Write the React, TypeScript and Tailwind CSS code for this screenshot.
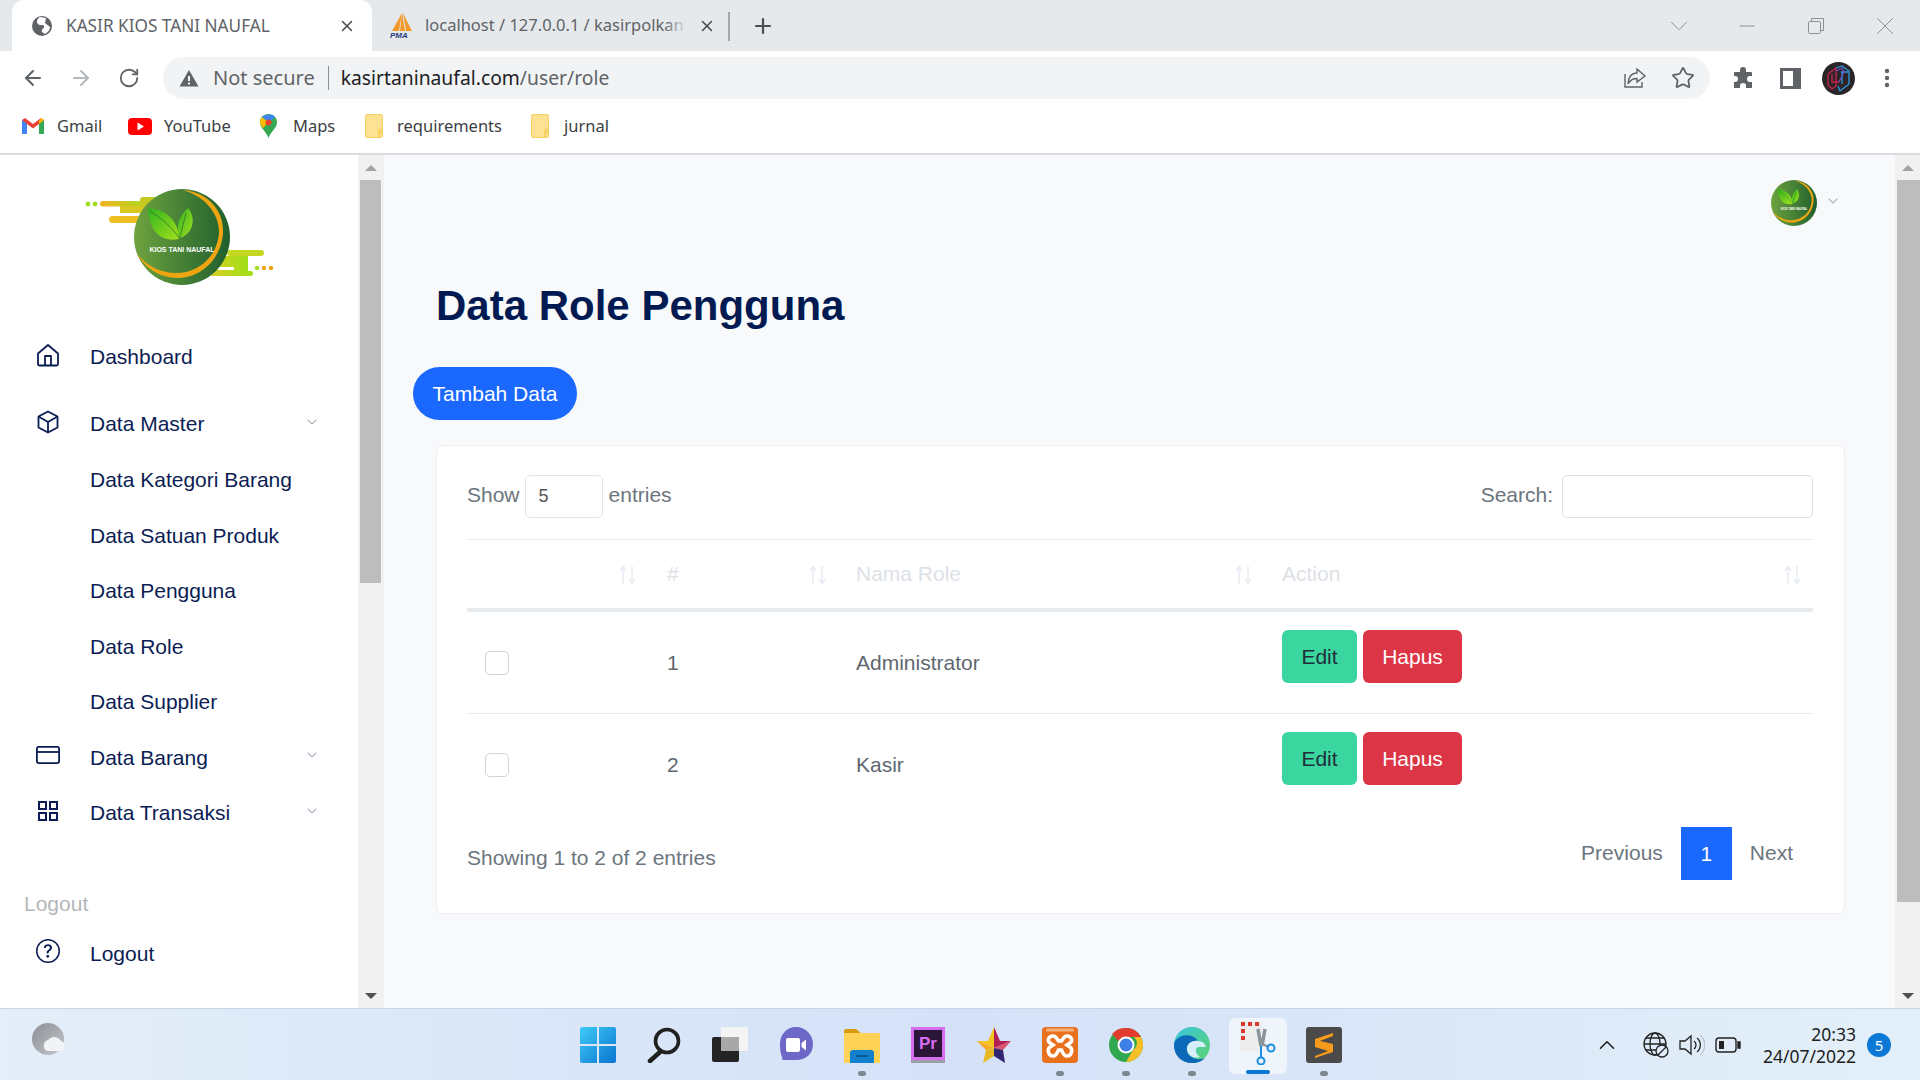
import { ArrowLeft, ArrowRight, RotateCw, X, Plus, Star, ChevronDown, ChevronUp, Minus, MoreVertical } from "lucide-react";
import { BsQuestionCircle } from "react-icons/bs";

const ui = "font-['Noto_Sans',sans-serif]";

const LogoMark = ({ labelSize = 7 }: { labelSize?: number }) => (
  <g>
    <defs>
      <linearGradient id="disc" x1="0" y1="0" x2="1" y2="0">
        <stop offset="0" stopColor="#6ea33f" />
        <stop offset="1" stopColor="#1f5f2d" />
      </linearGradient>
      <linearGradient id="leaf" x1="0" y1="0" x2="1" y2="1">
        <stop offset="0" stopColor="#2fb31f" />
        <stop offset="1" stopColor="#a4e01e" />
      </linearGradient>
    </defs>
    <circle cx="48" cy="48" r="48" fill="url(#disc)" />
    <path d="M49 1 C74 3 90 22 89 43 C88 70 66 90 42 89 C24 88 10 78 3 65 C14 78 28 84 42 84 C66 84 84 66 85 43 C85 25 72 8 49 1 Z" fill="#eda512" />
    <path d="M14 19 C26 20 44 26 45 50 C30 53 15 46 14 19 Z" fill="url(#leaf)" />
    <path d="M54 19 C62 28 60 44 46 49 C41 40 44 28 54 19 Z" fill="url(#leaf)" />
    <path d="M16 22 C28 30 38 38 45 49 M52 24 C50 32 48 40 46 48" stroke="#2b7a2a" strokeWidth="0.800" fill="none" />
    <text x="48" y="63" textAnchor="middle" fontSize={labelSize} fontWeight="700" fill="#fff" fontFamily="'Liberation Sans',sans-serif">
      KIOS TANI NAUFAL
    </text>
  </g>
);

const SidebarLogo = () => (
  <svg width="190" height="100" viewBox="0 0 190 100">
    <defs>
      <linearGradient id="streak" x1="0" y1="0" x2="1" y2="0">
        <stop offset="0" stopColor="#f4b223" />
        <stop offset="1" stopColor="#a5df1c" />
      </linearGradient>
      <linearGradient id="streak2" x1="0" y1="0" x2="1" y2="0">
        <stop offset="0" stopColor="#d8cf22" />
        <stop offset="1" stopColor="#9fe01a" />
      </linearGradient>
    </defs>
    <circle cx="3" cy="18" r="2.400" fill="#9fdc1c" />
    <circle cx="10" cy="18" r="2.400" fill="#9fdc1c" />
    <rect x="15" y="15" width="50" height="5.500" rx="2.700" fill="url(#streak)" />
    <rect x="35" y="20" width="30" height="7" fill="#d7c823" />
    <rect x="55" y="11" width="25" height="10" rx="3" fill="#c7c923" />
    <rect x="24" y="30" width="40" height="7" rx="3.500" fill="#eec022" />
    <rect x="142" y="64" width="37" height="6" rx="3" fill="#c4d821" />
    <rect x="125" y="70" width="38" height="15" fill="url(#streak2)" />
    <rect x="125" y="85" width="43" height="5" rx="2.500" fill="url(#streak2)" />
    <rect x="133" y="81" width="16" height="3" fill="#fff" />
    <circle cx="172" cy="82" r="2.200" fill="#a5df1c" />
    <circle cx="179" cy="82" r="2.200" fill="#eda512" />
    <circle cx="186" cy="82" r="2.200" fill="#eda512" />
    <g transform="translate(49 3)">
      <LogoMark />
    </g>
  </svg>
);

const HouseIcon = () => (
  <svg width="24" height="24" viewBox="0 0 24 24" fill="none" stroke="currentColor" strokeWidth="1.800" strokeLinejoin="round">
    <path d="M12 2 L22 10.500 V21 a1.500 1.500 0 0 1-1.500 1.500 H3.500 A1.500 1.500 0 0 1 2 21 V10.500 Z" />
    <path d="M9 22.500 V13 H15 V22.500" />
  </svg>
);

const CubeIcon = () => (
  <svg width="24" height="24" viewBox="0 0 24 24" fill="none" stroke="currentColor" strokeWidth="1.800" strokeLinejoin="round">
    <path d="M12 1.500 L21.500 6.500 V17.500 L12 22.500 L2.500 17.500 V6.500 Z" />
    <path d="M2.500 6.500 L12 12 L21.500 6.500 M12 12 V22.500" />
  </svg>
);

const CardIcon = () => (
  <svg width="24" height="24" viewBox="0 0 24 18" fill="none" stroke="currentColor" strokeWidth="1.800">
    <rect x="0.900" y="0.900" width="22.200" height="16.200" rx="2" />
    <path d="M1 6 H23" />
  </svg>
);

const GridIcon = () => (
  <svg width="24" height="24" viewBox="0 0 24 24" fill="none" stroke="currentColor" strokeWidth="2">
    <rect x="3" y="3" width="7" height="7" />
    <rect x="14" y="3" width="7" height="7" />
    <rect x="3" y="14" width="7" height="7" />
    <rect x="14" y="14" width="7" height="7" />
  </svg>
);

const MenuItem = ({ icon, label, chevron, tall }: { icon?: React.ReactNode; label: string; chevron?: boolean; tall?: boolean }) => (
  <div className={`flex items-center text-[21px] text-[#0b1d54] ${tall ? "h-[56px]" : "h-[55.5px]"}`}>
    <span className="w-[90px] pl-[36px] flex items-center shrink-0 -mt-[4px]">{icon}</span>
    <span className="flex-1">{label}</span>
    {chevron && <ChevronDown size={16} strokeWidth={1.6} className="text-[#a9b6c4] mr-[38px] -mt-[4px]" />}
  </div>
);

const SortArrows = () => (
  <svg width="20" height="20" viewBox="0 0 20 20" className="shrink-0 text-[#e6ebf2] mt-[2px]" fill="none" stroke="currentColor" strokeWidth="1.4">
    <path d="M6 19 V2 M3 6 L6 1.5 L9 6" />
    <path d="M15 1 V18 M12 14 L15 18.5 L18 14" />
  </svg>
);

const TableRow = ({ no, role, line }: { no: string; role: string; line?: boolean }) => (
  <div className={`grid grid-cols-[182px_189px_426px_549px] text-[#5f676f] ${line ? "h-[102px] border-b border-[#e9ecef]" : "h-[89px]"}`}>
    <div className="pl-[18px] pt-[39px]">
      <div className="w-[24px] h-[24px] rounded-[5px] border border-[#ced4da] bg-white" />
    </div>
    <div className="pl-[18px] pt-[39px] leading-[24px]">{no}</div>
    <div className="pl-[18px] pt-[39px] leading-[24px]">{role}</div>
    <div className="pl-[18px] pt-[18px] flex gap-[6px] items-start">
      <button className="w-[75px] h-[53px] rounded-[6px] bg-[#3bd59f] text-[#1f2d3a]">Edit</button>
      <button className="w-[99px] h-[53px] rounded-[6px] bg-[#dc3545] text-white">Hapus</button>
    </div>
  </div>
);

const Folder = () => (
  <svg width="18" height="24" viewBox="0 0 18 24">
    <rect x="0.5" y="0.5" width="17" height="23" rx="1.5" fill="#fde293" stroke="#f5d061" />
    <path d="M14 23 V16 a1 1 0 0 1 2 0 V20" fill="none" stroke="#f2c53d" />
  </svg>
);

const Bookmark = ({ icon, label, width, gap }: { icon: React.ReactNode; label: string; width: string; gap: string }) => (
  <div className={`flex items-center ${gap} ${width}`}>
    {icon}
    <span>{label}</span>
  </div>
);

const TaskIcon = ({ children, dot, active }: { children: React.ReactNode; dot?: boolean; active?: boolean }) => (
  <div className="relative w-[66px] h-[72px] flex items-center justify-center">
    {active && <div className="absolute left-[4px] right-[4px] top-[9px] bottom-[7px] rounded-[6px] bg-white/60" />}
    <div className="relative">{children}</div>
    {dot && <div className="absolute bottom-[5px] left-[29px] w-[8px] h-[5px] rounded-full bg-[#7d8790]" />}
    {active && <div className="absolute bottom-[7px] left-[21px] w-[24px] h-[4px] rounded-full bg-[#0a78d4]" />}
  </div>
);

const Taskbar = () => (
  <div className="h-[72px] shrink-0 grid grid-cols-[1fr_auto_1fr] border-t border-[#c8d5e8] bg-gradient-to-r from-[#e3eef8] via-[#d4e1f8] to-[#e3eff8]">
    <div className="pl-[32px] pt-[14px]">
      <svg width="36" height="34" viewBox="0 0 36 34">
        <defs>
          <linearGradient id="moon" x1="0" y1="0" x2="1" y2="1">
            <stop offset="0" stopColor="#8b8f94" />
            <stop offset="1" stopColor="#c4c8cd" />
          </linearGradient>
        </defs>
        <circle cx="16" cy="16" r="16" fill="url(#moon)" />
        <path d="M15 28 a6 6 0 0 1 1-11 a8 8 0 0 1 13 1 a5.500 5.500 0 0 1 1 10 Z" fill="#f1f4f7" />
      </svg>
    </div>
    <div className="flex ml-[2px]">
      <TaskIcon>
        <svg width="36" height="36" viewBox="0 0 36 36">
          <defs>
            <linearGradient id="win" x1="0" y1="0" x2="1" y2="1">
              <stop offset="0" stopColor="#3ecbf6" />
              <stop offset="1" stopColor="#0a74d1" />
            </linearGradient>
          </defs>
          <path d="M0 2 a2 2 0 0 1 2-2 H17 V17 H0 Z M19 0 H34 a2 2 0 0 1 2 2 V17 H19 Z M0 19 H17 V36 H2 a2 2 0 0 1-2-2 Z M19 19 H36 V34 a2 2 0 0 1-2 2 H19 Z" fill="url(#win)" />
        </svg>
      </TaskIcon>
      <TaskIcon>
        <svg width="34" height="36" viewBox="0 0 34 36" fill="none" stroke="#202020" strokeWidth="3.600" strokeLinecap="round">
          <circle cx="20" cy="14" r="11.500" />
          <path d="M13 25 L3 34" strokeWidth="4.500" />
        </svg>
      </TaskIcon>
      <TaskIcon>
        <svg width="36" height="36" viewBox="0 0 36 36">
          <rect x="0" y="10" width="27" height="25" rx="2" fill="#242424" />
          <rect x="9" y="0" width="27" height="24" rx="1" fill="#f4f4f4" />
          <rect x="9" y="10" width="18" height="14" fill="#a8a8a8" />
        </svg>
      </TaskIcon>
      <TaskIcon>
        <svg width="34" height="36" viewBox="0 0 34 36">
          <path d="M17 0 C27 0 34 8 34 17 C34 27 27 33 17 33 H3 C5 31 1 30 1 17 C1 8 7 0 17 0 Z" fill="#6d68c8" />
          <rect x="7" y="11" width="14" height="14" rx="2" fill="#fff" />
          <path d="M22.500 16 L27 12.500 V23.500 L22.500 20 Z" fill="#fff" />
        </svg>
      </TaskIcon>
      <TaskIcon dot>
        <svg width="36" height="36" viewBox="0 0 36 36">
          <path d="M0 4 a2 2 0 0 1 2-2 H12 L17 6 H36 V12 H0 Z" fill="#d89b0e" />
          <rect x="0" y="6" width="36" height="30" fill="#fdd257" />
          <path d="M6 36 V26 a3 3 0 0 1 3-3 H27 a3 3 0 0 1 3 3 V36 Z" fill="#1380ce" />
          <rect x="12" y="28" width="12" height="2" fill="#0b5a96" />
        </svg>
      </TaskIcon>
      <TaskIcon>
        <svg width="34" height="36" viewBox="0 0 34 36">
          <rect x="0" y="0" width="34" height="33" fill="#d66cf0" />
          <rect x="3" y="3" width="28" height="27" fill="#2b1638" />
          <rect x="0" y="33" width="34" height="3" fill="#9aa0a6" />
          <text x="8" y="22" fontSize="17" fontWeight="700" fill="#d66cf0" fontFamily="'Liberation Sans',sans-serif">Pr</text>
        </svg>
      </TaskIcon>
      <TaskIcon>
        <svg width="36" height="36" viewBox="0 0 36 36">
          <path d="M18 0 L18 21 L1 14 L12 14 Z" fill="#f4c421" />
          <path d="M18 0 L24 14 L35 14 L18 21 Z" fill="#b31f54" />
          <path d="M35 14 L27 23 L18 21 Z" fill="#d9536c" />
          <path d="M1 14 L10 23 L18 21 Z" fill="#f6a81f" />
          <path d="M18 21 L10 23 L7 36 L18 29 Z" fill="#e8b922" />
          <path d="M18 21 L27 23 L29 36 L18 29 Z" fill="#33256f" />
        </svg>
      </TaskIcon>
      <TaskIcon dot>
        <svg width="36" height="36" viewBox="0 0 36 36">
          <rect width="36" height="36" rx="4" fill="#e8711d" />
          <rect x="4" y="1.500" width="28" height="3" rx="1.500" fill="#f5b27f" />
          <path d="M11 9 C6 9 5 14 8 16 L11 18 L8 20 C5 22 6 29 11 29 C14 29 15 26 16.500 23 H19.500 C21 26 22 29 25 29 C30 29 31 22 28 20 L25 18 L28 16 C31 14 30 9 25 9 C22 9 21 12 19.500 14 H16.500 C15 12 14 9 11 9 Z" fill="none" stroke="#fff" strokeWidth="3.500" />
        </svg>
      </TaskIcon>
      <TaskIcon dot>
        <svg width="34" height="36" viewBox="0 0 34 36">
          <circle cx="17" cy="18" r="17" fill="#2fa84f" />
          <path d="M17 1 A17 17 0 0 1 32 10 H17 A8 8 0 0 0 9.500 14 L3 7 A17 17 0 0 1 17 1 Z" fill="#e23d2f" />
          <path d="M32 10 A17 17 0 0 1 17 35 L24 23 A8 8 0 0 0 25 10 Z" fill="#f6c026" />
          <circle cx="17" cy="18" r="8.500" fill="#fff" />
          <circle cx="17" cy="18" r="6.500" fill="#3f7fe8" />
        </svg>
      </TaskIcon>
      <TaskIcon dot>
        <svg width="36" height="38" viewBox="0 0 36 38">
          <defs>
            <linearGradient id="edge" x1="0" y1="0" x2="1" y2="1">
              <stop offset="0" stopColor="#37c5dd" />
              <stop offset="1" stopColor="#5ed36c" />
            </linearGradient>
          </defs>
          <circle cx="18" cy="19" r="18" fill="url(#edge)" />
          <path d="M0 19 C0 30 8 37 18 37 C24 37 28 35 31 32 C24 35 14 32 13 24 C12 18 18 14 24 15 C21 10 14 8 8 10 C3 12 0 15 0 19 Z" fill="#0c69ba" />
          <path d="M13 24 C14 30 20 33 26 31 C22 28 20 23 24 21 H32 C31 17 28 15 24 15 C18 14 12 18 13 24 Z" fill="#d6eef7" />
        </svg>
      </TaskIcon>
      <TaskIcon active>
        <svg width="36" height="46" viewBox="0 0 36 46" className="-mt-[6px]">
          <rect x="0" y="2" width="22" height="30" fill="#ececec" />
          <path d="M1 3 H5 V7 H1 Z M8 3 H12 V7 H8 Z M15 3 H19 V7 H15 Z M1 10 H5 V14 H1 Z M1 17 H5 V21 H1 Z" fill="#d83b2d" />
          <path d="M18 10 L21 27 M25 10 L22 27" stroke="#8a949c" strokeWidth="3.500" />
          <path d="M22 25 L29 28" stroke="#8a949c" strokeWidth="2" />
          <circle cx="31" cy="29" r="3.500" fill="none" stroke="#1d8fe0" strokeWidth="2" />
          <circle cx="21" cy="42" r="3.500" fill="none" stroke="#1d8fe0" strokeWidth="2" />
          <path d="M21 27 V38" stroke="#1d8fe0" strokeWidth="2" />
        </svg>
      </TaskIcon>
      <TaskIcon dot>
        <svg width="36" height="36" viewBox="0 0 36 36">
          <rect width="36" height="36" rx="3" fill="#4a4a4a" />
          <path d="M27 6 L9 12 V20 L22 24 L9 29 V31 L27 25 V17 L14 14 L27 9 Z" fill="#f79b1d" />
        </svg>
      </TaskIcon>
    </div>
    <div className={`flex items-center justify-end pr-[29px] text-[#1d1d1d] ${ui}`}>
      <ChevronUp size={26} strokeWidth={1.4} className="mr-[23px]" />
      <svg width="26" height="26" viewBox="0 0 26 26" fill="none" stroke="#222" strokeWidth="1.300" className="mr-[10px]">
        <circle cx="12" cy="12" r="11" />
        <ellipse cx="12" cy="12" rx="5" ry="11" />
        <path d="M1 12 H23 M3 6 H21 M3 18 H21" />
        <circle cx="19" cy="19" r="6" fill="#e1ecf8" />
        <path d="M15 23 L23 15" />
      </svg>
      <svg width="26" height="24" viewBox="0 0 26 24" fill="none" stroke="#222" strokeWidth="1.300" className="mr-[10px]">
        <path d="M1 8 H6 L12 3 V21 L6 16 H1 Z" />
        <path d="M15 8 a5 5 0 0 1 0 8 M18 5 a9 9 0 0 1 0 14" />
        <path d="M21 2 a13 13 0 0 1 0 20" stroke="#bbc3cc" />
      </svg>
      <svg width="26" height="16" viewBox="0 0 26 16" fill="none" stroke="#222" strokeWidth="1.400" className="mr-[22px]">
        <rect x="1" y="1" width="20" height="14" rx="3" />
        <rect x="4" y="4" width="5" height="8" fill="#222" stroke="none" />
        <path d="M23 5 V11 H25 V5 Z" fill="#222" />
      </svg>
      <div className="text-right text-[17.5px] leading-[22px] mr-[11px]">
        <div>20:33</div>
        <div>24/07/2022</div>
      </div>
      <div className="w-[24px] h-[24px] rounded-full bg-[#0a78d4] text-white text-[15px] flex items-center justify-center">5</div>
    </div>
  </div>
);

const BrowserChrome = () => (
  <div className={`shrink-0 h-[155px] bg-white border-b-2 border-[#dadce0] ${ui} text-[#5f6368]`}>
    <div className="h-[51px] bg-[#e6e9ec] flex items-end pl-[12px]">
      <div className="w-[360px] h-[51px] bg-white rounded-t-[12px] flex items-center pl-[20px] pr-[16px]">
        <svg width="20" height="20" viewBox="0 0 20 20" className="mr-[14px]">
          <circle cx="10" cy="10" r="10" fill="#5f6368" />
          <path d="M8 1 C5 3 4 6 6 8 C8 10 11 8 12 10 C13 12 9 13 10 16 L13 18 C16 16 18 14 18 11 L13 7 L14 2 Z" fill="#fff" />
        </svg>
        <span className="flex-1 text-[17.2px] whitespace-nowrap">KASIR KIOS TANI NAUFAL</span>
        <X size={18} strokeWidth={2} className="text-[#45484c]" />
      </div>
      <div className="w-[358px] h-[51px] flex items-center pl-[18px] pr-[14px] relative">
        <svg width="24" height="26" viewBox="0 0 24 26" className="mr-[11px] shrink-0">
          <path d="M12 0 L2 18 H9 Z M12 0 L10 18 H15 Z M13 0 L22 18 H16 Z" fill="#f29a2e" />
          <text x="0" y="25" fontSize="8" fontWeight="700" fontStyle="italic" fill="#1f3a7a" fontFamily="'Liberation Sans',sans-serif">PMA</text>
        </svg>
        <div className="relative flex-1 min-w-0 overflow-hidden">
          <span className="text-[16.5px] whitespace-nowrap">localhost / 127.0.0.1 / kasirpolkan</span>
          <div className="absolute right-0 top-0 bottom-0 w-[24px] bg-gradient-to-r from-transparent to-[#e6e9ec]" />
        </div>
        <X size={18} strokeWidth={2} className="ml-[10px] text-[#45484c] shrink-0" />
        <div className="absolute right-0 top-[12px] w-[2px] h-[29px] bg-[#a4a7ab]" />
      </div>
      <div className="h-[51px] w-[66px] flex items-center justify-center">
        <Plus size={24} strokeWidth={2.200} className="text-[#4a4d51]" />
      </div>
      <div className="flex-1 h-[51px] flex items-center justify-end text-[#8b9096]">
        <ChevronDown size={30} strokeWidth={0.8} className="mr-[41px]" />
        <Minus size={24} strokeWidth={1} className="mr-[49px]" />
        <svg width="16" height="16" viewBox="0 0 16 16" fill="none" stroke="currentColor" className="mr-[46px]">
          <rect x="0.500" y="3.500" width="12" height="12" rx="1" />
          <path d="M3.500 3 V0.500 H15.500 V12.500 H13" />
        </svg>
        <X size={30} strokeWidth={0.8} className="mr-[20px]" />
      </div>
    </div>
    <div className="h-[54px] flex items-center pl-[21px]">
      <ArrowLeft size={24} strokeWidth={2} className="mr-[24px]" />
      <ArrowRight size={24} strokeWidth={2} className="text-[#b5b8bc] mr-[25px]" />
      <RotateCw size={22} strokeWidth={2} className="mr-[23px]" />
      <div className="flex items-center h-[42px] w-[1547px] rounded-full bg-[#f1f3f4] pl-[16px] pr-[15px]">
        <svg width="20" height="18" viewBox="0 0 20 18" className="mr-[14px]">
          <path d="M10 1 L19.500 17.500 H0.500 Z" fill="#5f6368" />
          <rect x="9" y="7" width="2" height="5" fill="#f1f3f4" />
          <rect x="9" y="13.500" width="2" height="2" fill="#f1f3f4" />
        </svg>
        <span className="text-[20px]">Not secure</span>
        <div className="w-[1px] h-[24px] bg-[#8a8d91] ml-[13px] mr-[12px]" />
        <span className="flex-1 text-[19.3px] text-[#202124]">
          kasirtaninaufal.com<span className="text-[#5f6368]">/user/role</span>
        </span>
        <svg width="24" height="24" viewBox="0 0 24 24" fill="none" stroke="#5f6368" strokeWidth="1.400" className="mr-[24px]">
          <path d="M2 8 V21 H19 V16" />
          <path d="M14 3 L22 10 L14 16 V12.500 C10 12.500 7 14 5 18 C5 12 8 7 14 7 Z" />
        </svg>
        <Star size={24} strokeWidth={1.800} />
      </div>
      <svg width="22" height="22" viewBox="0 0 22 22" fill="#5f6368" className="ml-[22px] mr-[26px]">
        <path d="M8 3 a3 3 0 0 1 6 0 V5 H19 a1 1 0 0 1 1 1 V9 H18 a3 3 0 0 0 0 6 H20 V21 H14 V19 a3 3 0 0 0-6 0 V21 H2 V15 H3 a3 3 0 0 0 0-6 H2 V6 a1 1 0 0 1 1-1 H8 Z" />
      </svg>
      <svg width="21" height="21" viewBox="0 0 21 21" className="mr-[21px]">
        <rect width="21" height="21" fill="#5f6368" />
        <rect x="3" y="3" width="10" height="15" fill="#fff" />
      </svg>
      <svg width="33" height="33" viewBox="0 0 33 33" fill="none" strokeWidth="1.300">
        <circle cx="16.500" cy="16.500" r="16.500" fill="#2b2528" />
        <path d="M6 12 L14 6 V24 L10 27 L6 23 Z M10 12 V20 H17" stroke="#c8234f" />
        <path d="M14 6 L20 4 L27 9 V22 L18 29 L16 24 M19 10 H26 M20 10 V22" stroke="#2c9ae0" />
        <path d="M14 9 L20 6 L22 10 L17 20" stroke="#6c4fc0" />
      </svg>
      <MoreVertical size={24} strokeWidth={2.400} className="ml-[20px]" />
    </div>
    <div className="h-[42px] flex items-center pl-[22px] text-[16.5px] text-[#3c4043]">
      <Bookmark
        width="w-[106px]"
        gap="gap-[13px]"
        label="Gmail"
        icon={
          <svg width="22" height="16" viewBox="0 0 22 16">
            <path d="M0 2 V16 H5 V6 L11 10.500 L17 6 V16 H22 V2 L19 0 L11 6 L3 0 Z" fill="#ea4335" />
            <path d="M0 2 V16 H5 V6 Z" fill="#4285f4" />
            <path d="M17 6 V16 H22 V2 Z" fill="#34a853" />
            <path d="M19 0 L22 2 L17 6 V3 Z" fill="#fbbc04" />
          </svg>
        }
      />
      <Bookmark
        width="w-[132px]"
        gap="gap-[12px]"
        label="YouTube"
        icon={
          <svg width="24" height="17" viewBox="0 0 24 17">
            <rect width="24" height="17" rx="4" fill="#f00" />
            <path d="M9.500 4.500 L16 8.500 L9.500 12.500 Z" fill="#fff" />
          </svg>
        }
      />
      <Bookmark
        width="w-[105px]"
        gap="gap-[16px]"
        label="Maps"
        icon={
          <svg width="17" height="24" viewBox="0 0 17 24">
            <path d="M8.500 0 C3.500 0 0 3.500 0 8.500 C0 14 6 17 8.500 24 C11 17 17 14 17 8.500 C17 3.500 13.500 0 8.500 0 Z" fill="#34a853" />
            <path d="M2 3 C4 0.500 12 -1 15 3 L8.500 8.500 Z" fill="#4285f4" />
            <path d="M0 8.500 C0 6 1 4 2 3 L8.500 8.500 L3 14 C1 12 0 10 0 8.500 Z" fill="#fbbc04" />
            <circle cx="8.500" cy="8.500" r="3" fill="#ea4335" />
          </svg>
        }
      />
      <Bookmark width="w-[166px]" gap="gap-[14px]" label="requirements" icon={<Folder />} />
      <Bookmark width="w-[90px]" gap="gap-[15px]" label="jurnal" icon={<Folder />} />
    </div>
  </div>
);

const Scrollbar = ({ thumb }: { thumb: string }) => (
  <div className="flex flex-col w-[25px] shrink-0 bg-[#f1f1f1]">
    <div className="h-[25px] shrink-0 flex items-center justify-center">
      <div className="w-0 h-0 border-x-[6px] border-x-transparent border-b-[6px] border-b-[#a3a3a3]" />
    </div>
    <div className={`${thumb} bg-[#bdbdbd]`} />
    <div className="flex-1" />
    <div className="h-[25px] shrink-0 flex items-center justify-center">
      <div className="w-0 h-0 border-x-[6px] border-x-transparent border-t-[6px] border-t-[#505050]" />
    </div>
  </div>
);

const Sidebar = () => (
  <div className="w-[358px] shrink-0 bg-white overflow-hidden">
    <div className="pt-[31px] pl-[85px] h-[174px]">
      <SidebarLogo />
    </div>
    <MenuItem tall label="Dashboard" icon={<HouseIcon />} />
    <div className="mt-[11px]">
      <MenuItem tall label="Data Master" chevron icon={<CubeIcon />} />
    </div>
    <MenuItem label="Data Kategori Barang" />
    <MenuItem label="Data Satuan Produk" />
    <MenuItem label="Data Pengguna" />
    <MenuItem label="Data Role" />
    <MenuItem label="Data Supplier" />
    <MenuItem label="Data Barang" chevron icon={<CardIcon />} />
    <MenuItem label="Data Transaksi" chevron icon={<GridIcon />} />
    <div className="mt-[48px] pl-[24px] h-[30px] text-[21px] leading-[30px] text-[#b3b7bc]">Logout</div>
    <div className="mt-[7px]">
      <MenuItem label="Logout" icon={<BsQuestionCircle size={24} />} />
    </div>
  </div>
);

const MainContent = () => (
  <div className="flex-1 bg-[#f8f9fb] overflow-hidden border-l border-[#eef0f2]">
    <div className="pt-[25px] flex justify-end items-center pr-[54px]">
      <svg width="46" height="46" viewBox="0 0 96 96">
        <LogoMark labelSize={6} />
      </svg>
      <ChevronDown size={16} strokeWidth={1.6} className="text-[#a9b6c4] ml-[8px] -mt-[4px]" />
    </div>
    <h2 className="ml-[52px] mt-[51px] text-[42px] leading-[58px] font-bold text-[#021a52]">Data Role Pengguna</h2>
    <button className="ml-[29px] mt-[32px] block w-[164px] h-[53px] rounded-full bg-[#1b68ff] text-white text-[21px]">Tambah Data</button>
    <div className="ml-[52px] mt-[25px] w-[1409px] h-[469px] bg-white rounded-[7px] border border-[#eceef1] pt-[29px] pl-[30px] pr-[31px] text-[21px] text-[#6c757d]">
      <div className="flex items-center h-[43px]">
        <span className="-mt-[4px]">Show</span>
        <div className="ml-[5px] w-[78px] h-[43px] rounded-[5px] border border-[#dce7f1] pl-[13px] flex items-center text-[18px] text-[#555]">5</div>
        <span className="ml-[6px] -mt-[4px]">entries</span>
        <span className="ml-auto -mt-[4px]">Search:</span>
        <div className="ml-[9px] w-[251px] h-[43px] rounded-[5px] border border-[#dee2e6]" />
      </div>
      <div className="mt-[21px] border-t border-[#e9ecef] border-b-4 border-b-[#e9ecef] grid grid-cols-[182px_189px_426px_549px] h-[73px] text-[#dde1e7] items-center">
        <div className="flex items-center justify-end pr-[12px]">
          <SortArrows />
        </div>
        <div className="flex items-center justify-between pl-[18px] pr-[11px]">
          <span>#</span>
          <SortArrows />
        </div>
        <div className="flex items-center justify-between pl-[18px] pr-[11px]">
          <span>Nama Role</span>
          <SortArrows />
        </div>
        <div className="flex items-center justify-between pl-[18px] pr-[11px]">
          <span>Action</span>
          <SortArrows />
        </div>
      </div>
      <TableRow line no="1" role="Administrator" />
      <TableRow no="2" role="Kasir" />
      <div className="mt-[24px] flex items-center h-[53px]">
        <span className="mt-[9px]">Showing 1 to 2 of 2 entries</span>
        <div className="ml-auto flex items-center">
          <span className="-mt-[2px]">Previous</span>
          <span className="ml-[18px] w-[51px] h-[53px] bg-[#1b68ff] text-white flex items-center justify-center">1</span>
          <span className="ml-[18px] mr-[20px] -mt-[2px]">Next</span>
        </div>
      </div>
    </div>
  </div>
);

const App = () => {
  return (
    <div className="w-[1920px] h-[1080px] overflow-hidden flex flex-col font-['Liberation_Sans',Arial,sans-serif]">
      <BrowserChrome />
      <div className="flex-1 flex min-h-0">
        <Sidebar />
        <Scrollbar thumb="mx-[2px] h-[403px]" />
        <MainContent />
        <Scrollbar thumb="ml-[2px] h-[722px]" />
      </div>
      <Taskbar />
    </div>
  );
};

export default App;
